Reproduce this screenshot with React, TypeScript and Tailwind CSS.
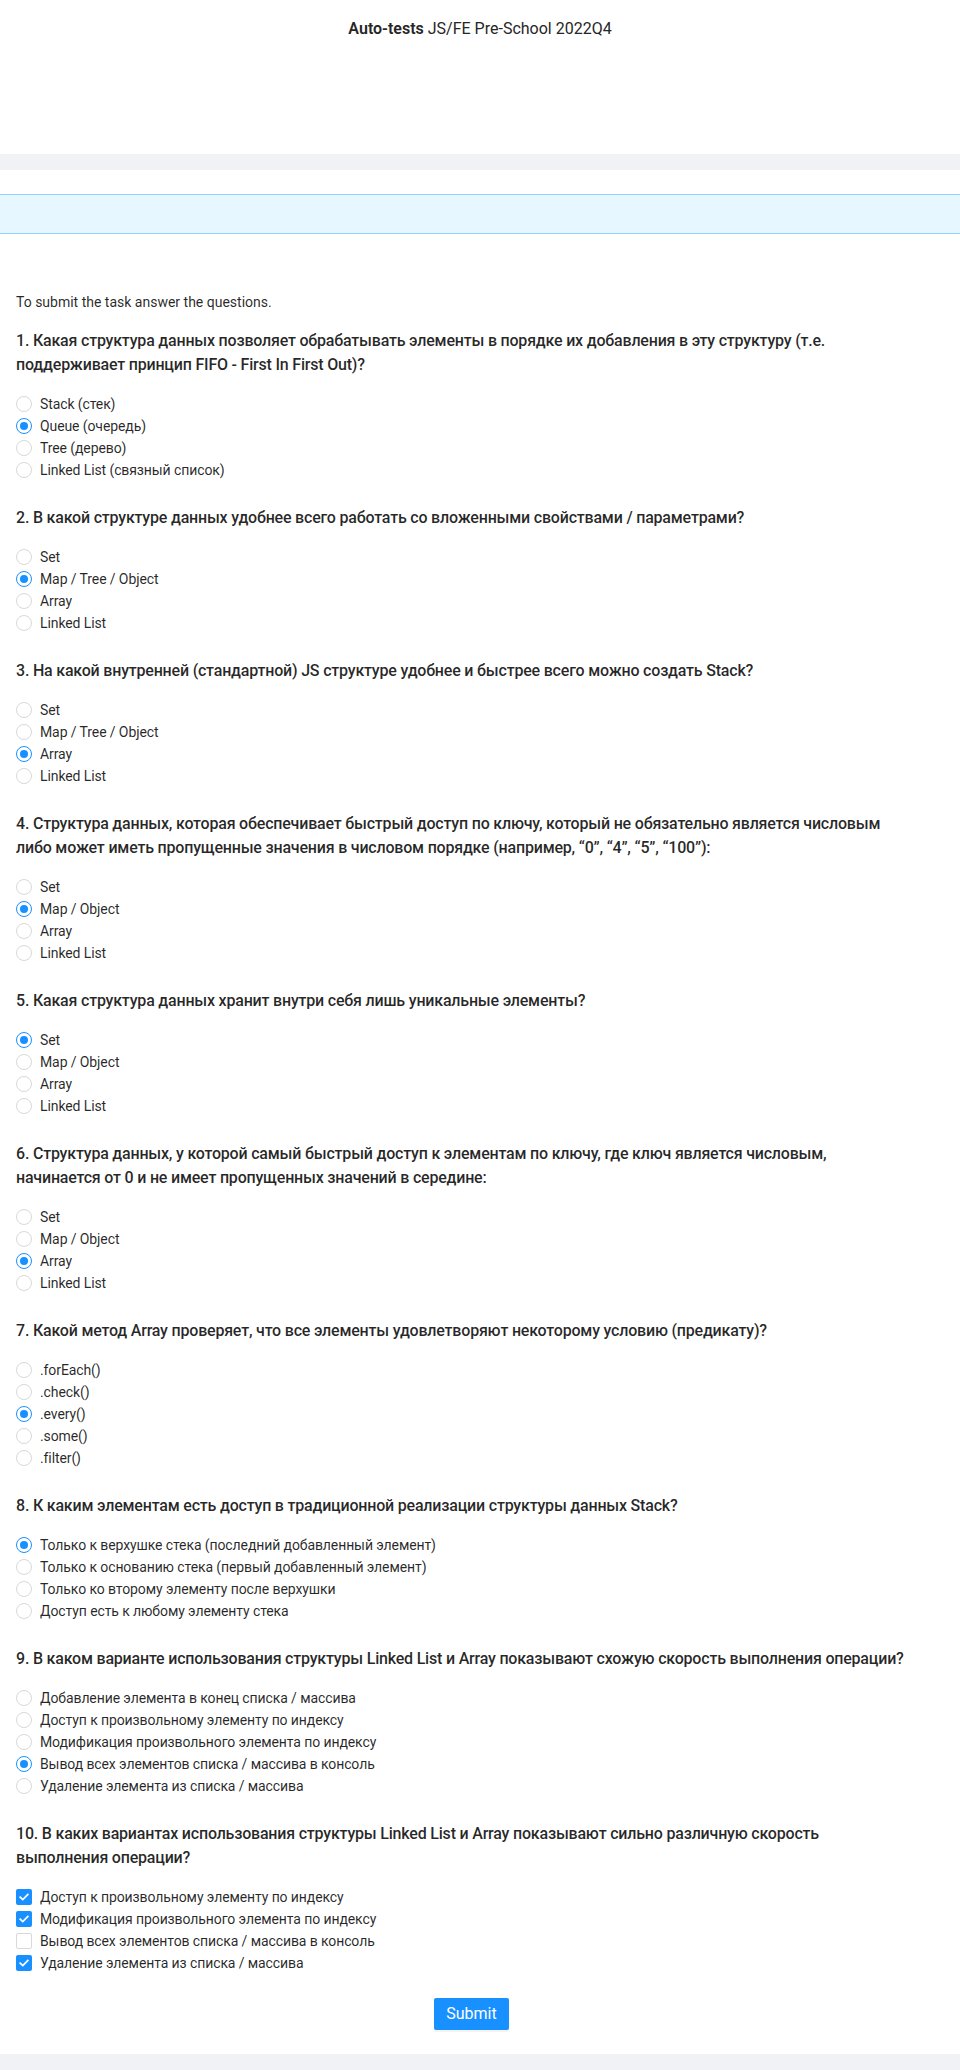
import React from "react";

type Q = {
  title: React.ReactNode;
  options: string[];
  selected: number[];
  multi?: boolean;
};

const questions: Q[] = [
  {
    title: (
      <>
        1. Какая структура данных позволяет обрабатывать элементы в порядке их добавления в эту структуру (т.е.
        <br />
        поддерживает принцип FIFO - First In First Out)?
      </>
    ),
    options: ["Stack (стек)", "Queue (очередь)", "Tree (дерево)", "Linked List (связный список)"],
    selected: [1],
  },
  {
    title: "2. В какой структуре данных удобнее всего работать со вложенными свойствами / параметрами?",
    options: ["Set", "Map / Tree / Object", "Array", "Linked List"],
    selected: [1],
  },
  {
    title: "3. На какой внутренней (стандартной) JS структуре удобнее и быстрее всего можно создать Stack?",
    options: ["Set", "Map / Tree / Object", "Array", "Linked List"],
    selected: [2],
  },
  {
    title: (
      <>
        4. Структура данных, которая обеспечивает быстрый доступ по ключу, который не обязательно является числовым
        <br />
        либо может иметь пропущенные значения в числовом порядке (например, “0”, “4”, “5”, “100”):
      </>
    ),
    options: ["Set", "Map / Object", "Array", "Linked List"],
    selected: [1],
  },
  {
    title: "5. Какая структура данных хранит внутри себя лишь уникальные элементы?",
    options: ["Set", "Map / Object", "Array", "Linked List"],
    selected: [0],
  },
  {
    title: (
      <>
        6. Структура данных, у которой самый быстрый доступ к элементам по ключу, где ключ является числовым,
        <br />
        начинается от 0 и не имеет пропущенных значений в середине:
      </>
    ),
    options: ["Set", "Map / Object", "Array", "Linked List"],
    selected: [2],
  },
  {
    title: "7. Какой метод Array проверяет, что все элементы удовлетворяют некоторому условию (предикату)?",
    options: [".forEach()", ".check()", ".every()", ".some()", ".filter()"],
    selected: [2],
  },
  {
    title: "8. К каким элементам есть доступ в традиционной реализации структуры данных Stack?",
    options: [
      "Только к верхушке стека (последний добавленный элемент)",
      "Только к основанию стека (первый добавленный элемент)",
      "Только ко второму элементу после верхушки",
      "Доступ есть к любому элементу стека",
    ],
    selected: [0],
  },
  {
    title: "9. В каком варианте использования структуры Linked List и Array показывают схожую скорость выполнения операции?",
    options: [
      "Добавление элемента в конец списка / массива",
      "Доступ к произвольному элементу по индексу",
      "Модификация произвольного элемента по индексу",
      "Вывод всех элементов списка / массива в консоль",
      "Удаление элемента из списка / массива",
    ],
    selected: [3],
  },
  {
    title: (
      <>
        10. В каких вариантах использования структуры Linked List и Array показывают сильно различную скорость
        <br />
        выполнения операции?
      </>
    ),
    options: [
      "Доступ к произвольному элементу по индексу",
      "Модификация произвольного элемента по индексу",
      "Вывод всех элементов списка / массива в консоль",
      "Удаление элемента из списка / массива",
    ],
    selected: [0, 1, 3],
    multi: true,
  },
];

function Radio({ checked }: { checked: boolean }) {
  return (
    <span
      className={
        checked
          ? "flex h-4 w-4 shrink-0 items-center justify-center rounded-full border border-[#1890ff] bg-white"
          : "flex h-4 w-4 shrink-0 items-center justify-center rounded-full border border-[#d9d9d9] bg-white"
      }
    >
      {checked && <span className="h-2 w-2 rounded-full bg-[#1890ff]" />}
    </span>
  );
}

function Checkbox({ checked }: { checked: boolean }) {
  return checked ? (
    <span className="flex h-4 w-4 shrink-0 items-center justify-center rounded-[2px] bg-[#1890ff]">
      <svg width="10" height="8" viewBox="0 0 10 8" fill="none">
        <path d="M1.2 4.1 L3.8 6.5 L8.8 1.4" stroke="white" strokeWidth="1.7" strokeLinecap="square" />
      </svg>
    </span>
  ) : (
    <span className="h-4 w-4 shrink-0 rounded-[2px] border border-[#d9d9d9] bg-white" />
  );
}

export default function App() {
  return (
    <div className="min-h-[2070px] bg-white font-['Segoe_UI','Roboto','Noto_Sans',sans-serif] text-[rgba(0,0,0,0.85)]">
      <header className="h-[154px] pt-[17px] text-center text-[16px] leading-[24px] text-[#262626]">
        <span className="font-semibold">Auto-tests</span> <span>JS/FE Pre-School 2022Q4</span>
      </header>
      <div className="h-[16px] bg-[#f0f2f5]" />
      <div className="mt-[24px] h-[40px] border-y border-[#91d5ff] bg-[#e6f7ff]" />
      <main className="px-4 pt-[57px]">
        <p className="text-[14px] leading-[22px]">To submit the task answer the questions.</p>
        <div className="mt-4 flex flex-col gap-[25px]">
          {questions.map((q, qi) => (
            <section key={qi} className="flex flex-col gap-4">
              <h3 className="text-[16px] font-medium leading-[24px] tracking-[-0.2px]">{q.title}</h3>
              <div className="flex flex-col">
                {q.options.map((o, oi) => {
                  const checked = q.selected.includes(oi);
                  return (
                    <label
                      key={oi}
                      className="flex h-[22px] items-center gap-2 text-[14px] leading-[22px] tracking-[-0.1px]"
                    >
                      {q.multi ? <Checkbox checked={checked} /> : <Radio checked={checked} />}
                      <span>{o}</span>
                    </label>
                  );
                })}
              </div>
            </section>
          ))}
        </div>
        <div className="mt-6 flex justify-center pr-[17px]">
          <button className="h-[32px] w-[75px] rounded-[2px] bg-[#1890ff] text-[16px] text-white shadow-[0_2px_0_rgba(0,0,0,0.045)]">
            Submit
          </button>
        </div>
      </main>
      <div className="mt-[24px] h-[16px] bg-[#f0f2f5]" />
    </div>
  );
}
